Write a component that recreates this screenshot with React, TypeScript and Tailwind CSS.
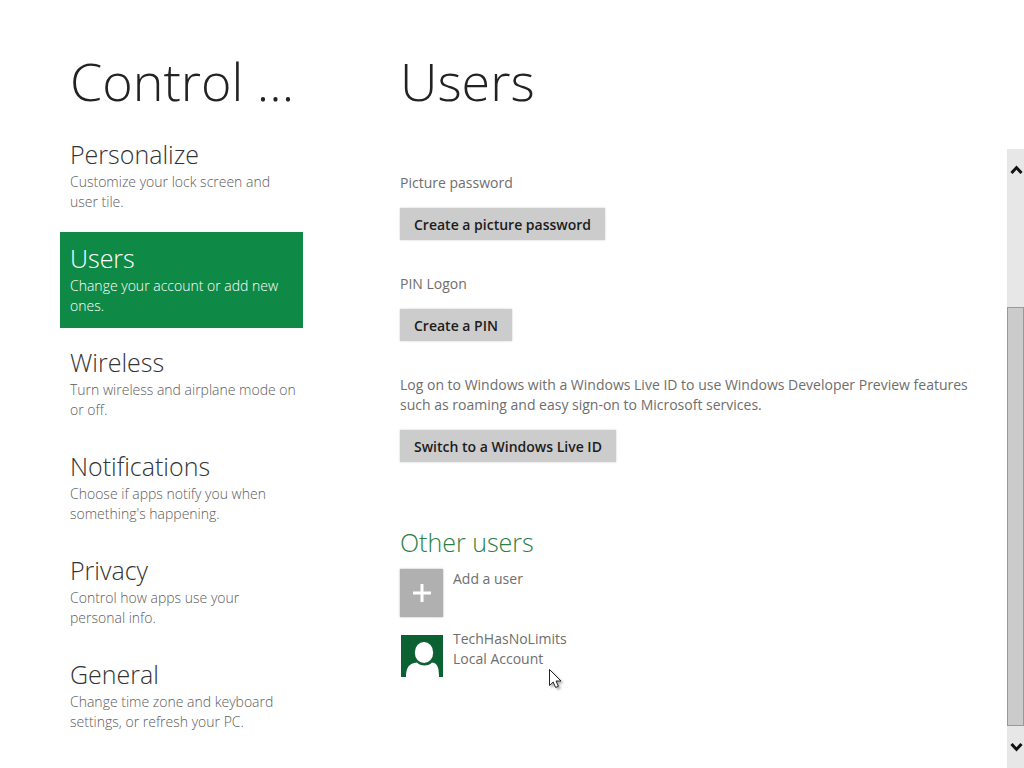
import React from "react";

const categories = [
  { title: "Personalize", lines: ["Customize your lock screen and", "user tile."] },
  { title: "Users", lines: ["Change your account or add new", "ones."] },
  { title: "Wireless", lines: ["Turn wireless and airplane mode on", "or off."] },
  { title: "Notifications", lines: ["Choose if apps notify you when", "something's happening."] },
  { title: "Privacy", lines: ["Control how apps use your", "personal info."] },
  { title: "General", lines: ["Change time zone and keyboard", "settings, or refresh your PC."] },
];

function CategoryNav() {
  return (
    <nav className="flex flex-col gap-2" aria-label="Categories">
      {categories.map((category) => {
        const active = category.title === "Users";
        return (
          <a
            key={category.title}
            href="#"
            aria-current={active ? "page" : undefined}
            className={
              active
                ? "block bg-[#0f8a46] px-2.5 pt-2 pb-3 text-white"
                : "block px-2.5 pt-2 pb-3 text-[#333333]"
            }
          >
            <span className="block text-[25px] leading-9 font-light">{category.title}</span>
            <span
              className={
                active
                  ? "block text-sm leading-5 font-light whitespace-nowrap text-white"
                  : "block text-sm leading-5 font-light whitespace-nowrap text-[#5c5c5c]"
              }
            >
              {category.lines[0]}
              <br />
              {category.lines[1]}
            </span>
          </a>
        );
      })}
    </nav>
  );
}

function Option({ children, action }: { children: React.ReactNode; action: string }) {
  return (
    <section className="flex flex-col items-start gap-[15px]">
      <p>{children}</p>
      <button
        type="button"
        className="h-8 bg-[#cccccc] px-3.5 pt-0.5 text-sm font-semibold text-[#1c1c1c] shadow-[0_0_2px_#cccccc]"
      >
        {action}
      </button>
    </section>
  );
}

function Chevron({ d }: { d: string }) {
  return (
    <svg viewBox="0 0 14 9" className="h-[9px] w-3.5" fill="none" stroke="#111111" strokeWidth="3">
      <path d={d} />
    </svg>
  );
}

function ScrollBar() {
  return (
    <div className="flex w-[17px] shrink-0 flex-col bg-[#e7e7e7]">
      <button type="button" aria-label="Scroll up" className="flex h-10 items-center justify-end">
        <Chevron d="M1.5 8 L6.5 2.6 L11.5 8" />
      </button>
      <div className="grow-[118]" />
      <div className="grow-[419] border border-[#999999] bg-[#cbcbcb]" />
      <button type="button" aria-label="Scroll down" className="flex h-[42px] items-center justify-end">
        <Chevron d="M1.5 1 L6.5 6.4 L11.5 1" />
      </button>
    </div>
  );
}

function Avatar() {
  return (
    <svg viewBox="0 0 42 42" className="h-[42px] w-[42px]" aria-hidden="true">
      <rect width="42" height="42" fill="#0c6132" />
      <path d="M5 42 C5 33 8 28 16 27.5 C19 31.5 28 31.5 31 27.5 C37 28 38 34 38 42 Z" fill="#fff" />
      <ellipse cx="23" cy="17.5" rx="9.2" ry="10.5" fill="#fff" />
    </svg>
  );
}

function Pointer() {
  return (
    <svg
      viewBox="0 0 16 22"
      className="pointer-events-none absolute top-[668px] left-[548px] h-[22px] w-4 drop-shadow-[2px_2px_1px_rgba(0,0,0,0.3)]"
      aria-hidden="true"
    >
      <path
        d="M1.5 1.5 V17.5 L5.2 14 L7.6 19.5 L10.4 18.3 L8 13 H13 Z"
        fill="#fff"
        stroke="#222"
        strokeWidth="1"
      />
    </svg>
  );
}

export default function App() {
  return (
    <div className="relative flex min-h-screen bg-white font-['Open_Sans','Noto_Sans',sans-serif]">
      <aside className="ml-[60px] w-[243px] shrink-0">
        <h1 className="h-32 px-2.5 pt-[45px] text-[52px] leading-[72px] font-light whitespace-nowrap text-[#222222]">
          Control ...
        </h1>
        <CategoryNav />
      </aside>
      <main className="ml-[97px] flex min-w-0 grow flex-col">
        <h2 className="h-[149px] pt-[45px] text-[52px] leading-[72px] font-light text-[#222222]">
          Users
        </h2>
        <div className="flex grow justify-between">
          <div className="flex flex-col pt-6 text-sm leading-5 text-[#6e6e6e]">
            <div className="flex flex-col gap-[34px]">
              <Option action="Create a picture password">Picture password</Option>
              <Option action="Create a PIN">PIN Logon</Option>
              <Option action="Switch to a Windows Live ID">
                Log on to Windows with a Windows Live ID to use Windows Developer Preview features
                <br />
                such as roaming and easy sign-on to Microsoft services.
              </Option>
            </div>
            <h3 className="mt-[62px] text-[25px] leading-9 font-light text-[#2c7f45]">Other users</h3>
            <div className="mt-[9px] flex flex-col gap-3">
              <button type="button" className="flex items-start gap-2.5 text-left">
                <span className="flex h-12 w-[43px] items-center justify-center bg-[#b0b0b0] shadow-[0_0_2px_#b0b0b0]">
                  <svg viewBox="0 0 18 18" className="h-[18px] w-[18px]" stroke="#fff" strokeWidth="3">
                    <path d="M9 0 V18 M0 9 H18" />
                  </svg>
                </span>
                <span>Add a user</span>
              </button>
              <div className="flex items-end gap-2.5">
                <div className="pt-1.5 pl-px">
                  <Avatar />
                </div>
                <p className="self-start">
                  TechHasNoLimits
                  <br />
                  Local Account
                </p>
              </div>
            </div>
          </div>
          <ScrollBar />
        </div>
      </main>
      <Pointer />
    </div>
  );
}
